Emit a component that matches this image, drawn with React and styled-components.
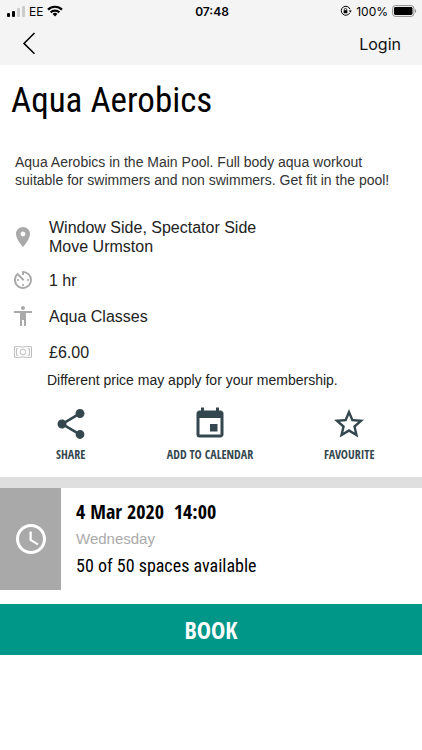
import React from 'react'
import styled, { createGlobalStyle } from 'styled-components'
import {
    MdLocationOn,
    MdAvTimer,
    MdAccessibility,
    MdShare,
    MdEvent,
    MdStarBorder,
    MdAccessTime
} from 'react-icons/md'

const theme = {
    sans: '"Liberation Sans", Arial, sans-serif',
    heading: '"Roboto Condensed", "Liberation Sans Narrow", sans-serif',
    narrow: '"Open Sans Condensed", "Roboto Condensed", "Liberation Sans Narrow", sans-serif',
    bar: '#f4f4f4',
    slate: '#34474f',
    icon: '#a9a9a9',
    primary: '#009688'
}

const GlobalStyle = createGlobalStyle`
    * {
        box-sizing: border-box;
    }
    body {
        margin: 0;
        background: #ffffff;
        color: #000000;
        font-family: ${theme.sans};
    }
    h1, h2, p, ul {
        margin: 0;
        padding: 0;
        font-weight: normal;
    }
    svg {
        display: block;
    }
`

const StatusBar = styled.div`
    display: grid;
    grid-template-columns: 1fr auto 1fr;
    align-items: center;
    height: 22px;
    padding: 0 5px 0 7px;
    background: ${theme.bar};
    font-family: Inter, sans-serif;
    font-size: 12px;
`

const StatusGroup = styled.div`
    display: flex;
    align-items: center;
    justify-content: ${props => props.$end ? "flex-end" : "flex-start"};
    gap: 4px;
`

const Clock = styled.time`
    font-size: 12px;
    font-weight: 600;
`

const NavBar = styled.nav`
    display: flex;
    align-items: center;
    justify-content: space-between;
    height: 43px;
    padding: 0 21px;
    background: ${theme.bar};
`

const PlainButton = styled.button`
    border: 0;
    padding: 0;
    background: none;
    cursor: pointer;
`

const LoginLink = styled.a`
    color: #111111;
    font-family: Inter, sans-serif;
    font-size: 16px;
    text-decoration: none;
`

const Title = styled.h1`
    padding: 15px 11px 0;
    font-family: ${theme.heading};
    font-size: 35px;
    line-height: 42px;
`

const Description = styled.p`
    padding: 31px 15px 0;
    color: #333333;
    font-size: 14px;
    line-height: 18px;
`

const Details = styled.ul`
    display: flex;
    flex-direction: column;
    gap: 12px;
    padding: 29px 11px 0;
    list-style: none;
`

const Detail = styled.li`
    display: flex;
    align-items: center;
    gap: 14px;
    color: #222222;
    font-size: 16px;
    line-height: 19px;

    svg {
        flex: none;
        color: ${theme.icon};
    }
`

const PriceNote = styled.p`
    padding: 6px 47px 0;
    color: #222222;
    font-size: 14px;
    line-height: 20px;
`

const Actions = styled.div`
    display: grid;
    grid-template-columns: repeat(3, 1fr);
    padding: 16px 3px 14px 1px;
`

const Action = styled(PlainButton)`
    display: flex;
    flex-direction: column;
    align-items: center;
    gap: 5px;
    color: ${theme.slate};
    font-family: ${theme.narrow};
    font-size: 12px;
    font-weight: 700;
    line-height: 16px;
`

const Session = styled.section`
    display: flex;
    border-top: 11px solid #dfdfdf;
`

const SessionIcon = styled.div`
    display: flex;
    align-items: center;
    justify-content: center;
    width: 61px;
    background: ${theme.icon};
    color: #ffffff;
`

const SessionInfo = styled.div`
    flex: 1;
    padding: 10px 15px;
`

const SessionDate = styled.h2`
    font-family: ${theme.narrow};
    font-size: 20px;
    font-weight: 700;
    line-height: 28px;
    white-space: pre;
`

const SessionDay = styled.p`
    color: #aaaaaa;
    font-size: 15px;
    line-height: 26px;
`

const Spaces = styled.p`
    font-family: ${theme.heading};
    font-size: 18px;
    line-height: 28px;
`

const BookButton = styled(PlainButton)`
    display: block;
    width: 100%;
    height: 51px;
    margin-top: 14px;
    background: ${theme.primary};
    color: #ffffff;
    font-family: ${theme.narrow};
    font-size: 24px;
    font-weight: 700;
`

const SignalIcon = () => (
    <svg width="18" height="12" viewBox="0 0 18 12">
        <rect x="0" y="8" width="3" height="4" rx="1" />
        <rect x="5" y="6" width="3" height="6" rx="1" />
        <rect x="10" y="3" width="3" height="9" rx="1" fill="#cccccc" />
        <rect x="15" y="1" width="3" height="11" rx="1" fill="#cccccc" />
    </svg>
)

const WifiIcon = () => (
    <svg width="16" height="12" viewBox="0 0 16 12" fill="none" stroke="#000000" strokeWidth="2.2">
        <path d="M1 4.6a10 10 0 0 1 14 0" />
        <path d="M3.7 7.4a6.2 6.2 0 0 1 8.6 0" />
        <path d="M8 11.4 5.6 9a3.5 3.5 0 0 1 4.8 0z" fill="#000000" stroke="none" />
    </svg>
)

const RotationLockIcon = () => (
    <svg width="12" height="12" viewBox="0 0 12 12">
        <path d="M9.8 7.8A4.5 4.5 0 1 1 10 4.2" fill="none" stroke="#000000" />
        <path d="M8.6 5.4h3.2L10.4 7.6z" />
        <path d="M4.3 5.4V4.6a1.2 1.2 0 0 1 2.4 0v.8" fill="none" stroke="#000000" strokeWidth=".8" />
        <rect x="3.6" y="5.2" width="3.8" height="3" rx=".5" />
    </svg>
)

const BatteryIcon = () => (
    <svg width="25" height="12" viewBox="0 0 25 12">
        <rect x=".6" y=".6" width="21.3" height="10.8" rx="2.8" fill="none" stroke="#8e8e8e" strokeWidth="1" />
        <rect x="2" y="2" width="18.5" height="8" rx="1.4" />
        <path d="M23 4v4c1.6-.6 1.6-3.4 0-4z" fill="#8e8e8e" />
    </svg>
)

const BackIcon = () => (
    <svg width="16" height="24" viewBox="0 0 16 24" fill="none" stroke="#000000" strokeWidth="1.5">
        <path d="M13.5 1 3 11.4 13.5 21.8" />
    </svg>
)

const MoneyIcon = () => (
    <svg width="24" height="24" viewBox="0 0 24 24" fill="none" stroke="currentColor" strokeWidth=".8">
        <path d="M3.5 6.8C7 6 9 7 12 7s5-1 8.5-.2v10.400c-3.5.8-5.5-.2-8.5-.2s-5 1-8.5.2z" />
        <circle cx="12" cy="12" r="2.9" />
        <path d="M7.3 8.700H5.600v6.600h1.700M16.700 8.700h1.700v6.600h-1.700" />
    </svg>
)

const details = [
    { icon: <MdLocationOn size={24} />, lines: ['Window Side, Spectator Side', 'Move Urmston'] },
    { icon: <MdAvTimer size={24} />, lines: ['1 hr'] },
    { icon: <MdAccessibility size={24} />, lines: ['Aqua Classes'] },
    { icon: <MoneyIcon />, lines: ['£6.00'] }
]

const actions = [
    { icon: <MdShare size={36} />, label: 'SHARE' },
    { icon: <MdEvent size={36} />, label: 'ADD TO CALENDAR' },
    { icon: <MdStarBorder size={36} />, label: 'FAVOURITE' }
]

export default function App() {
    return (
        <>
            <GlobalStyle />
            <StatusBar>
                <StatusGroup>
                    <SignalIcon />
                    <span>EE</span>
                    <WifiIcon />
                </StatusGroup>
                <Clock>07:48</Clock>
                <StatusGroup $end>
                    <RotationLockIcon />
                    <span>100%</span>
                    <BatteryIcon />
                </StatusGroup>
            </StatusBar>
            <NavBar>
                <PlainButton type="button" aria-label="Back"><BackIcon /></PlainButton>
                <LoginLink href="#login">Login</LoginLink>
            </NavBar>
            <main>
                <Title>Aqua Aerobics</Title>
                <Description>
                    Aqua Aerobics in the Main Pool. Full body aqua workout suitable for swimmers and non swimmers. Get fit in the pool!
                </Description>
                <Details>
                    {details.map(item => (
                        <Detail key={item.lines[0]}>
                            {item.icon}
                            <div>
                                {item.lines.map(line => <p key={line}>{line}</p>)}
                            </div>
                        </Detail>
                    ))}
                </Details>
                <PriceNote>Different price may apply for your membership.</PriceNote>
                <Actions>
                    {actions.map(item => (
                        <Action key={item.label} type="button">
                            {item.icon}
                            {item.label}
                        </Action>
                    ))}
                </Actions>
                <Session>
                    <SessionIcon><MdAccessTime size={36} /></SessionIcon>
                    <SessionInfo>
                        <SessionDate>{'4 Mar 2020  14:00'}</SessionDate>
                        <SessionDay>Wednesday</SessionDay>
                        <Spaces>50 of 50 spaces available</Spaces>
                    </SessionInfo>
                </Session>
                <BookButton type="button">BOOK</BookButton>
            </main>
        </>
    )
}
